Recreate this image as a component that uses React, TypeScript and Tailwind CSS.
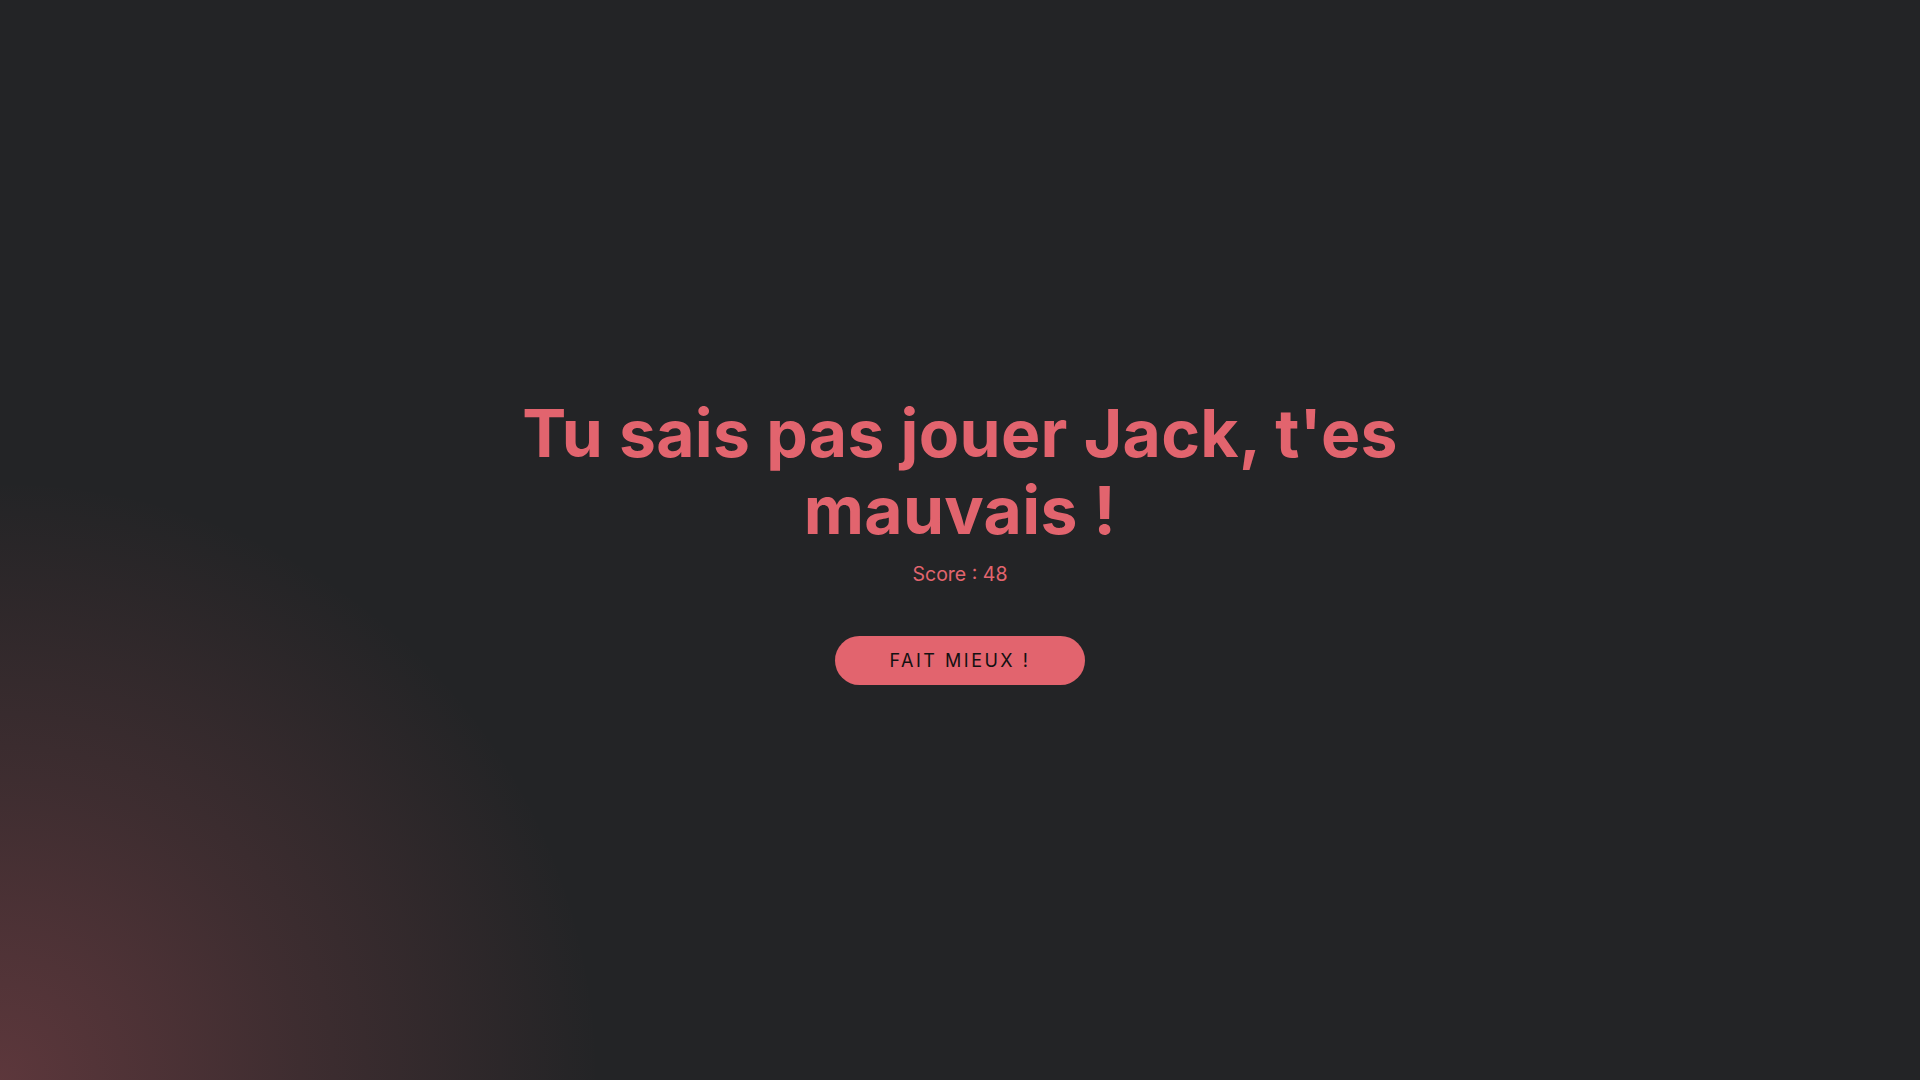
export default function App() {
  return (
    <div className="min-h-screen w-full bg-[#232426] bg-[radial-gradient(circle_at_0%_100%,rgba(226,100,110,0.3)_0%,rgba(226,100,110,0.14)_300px,rgba(226,100,110,0)_600px)] flex items-center justify-center font-['Inter','Liberation_Sans',sans-serif]">
      <div className="flex flex-col items-center text-center">
        <h1 className="w-[920px] text-[66px] leading-[76.8px] tracking-[0.3px] font-bold text-[#e2646e]">
          Tu sais pas jouer Jack, t'es mauvais !
        </h1>
        <p className="mt-[11px] text-[19.5px] leading-[28px] text-[#e2646e]">Score : 48</p>
        <button className="mt-[48px] w-[250px] h-[49px] rounded-full bg-[#e2646e] text-[#111111] text-[18px] tracking-[2.5px] uppercase">
          FAIT MIEUX !
        </button>
      </div>
    </div>
  );
}
